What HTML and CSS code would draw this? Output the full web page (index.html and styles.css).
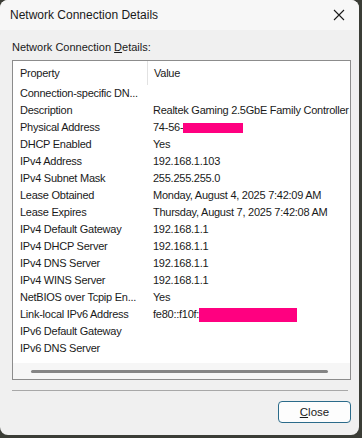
FILE: index.html
```html
<!DOCTYPE html>
<html>
<head>
<meta charset="utf-8">
<link rel="stylesheet" href="styles.css">
</head>
<body>
<div class="window">
  <div class="titlebar">
    <span class="title">Network Connection Details</span>
    <svg class="x" width="12" height="12" viewBox="0 0 12 12"><path d="M1 1L11 11M11 1L1 11" stroke="#1a1a1a" stroke-width="1.1" fill="none"/></svg>
  </div>
  <div class="body">
    <div class="label">Network Connection <u>D</u>etails:</div>
    <div class="list">
      <div class="head">
        <div class="c1">Property</div>
        <div class="c2">Value</div>
      </div>
      <div class="rows">
        <div class="row"><div class="c1">Connection-specific DN...</div><div class="c2"></div></div>
        <div class="row"><div class="c1">Description</div><div class="c2">Realtek Gaming 2.5GbE Family Controller</div></div>
        <div class="row"><div class="c1">Physical Address</div><div class="c2">74-56-<span class="redact r1"></span></div></div>
        <div class="row"><div class="c1">DHCP Enabled</div><div class="c2">Yes</div></div>
        <div class="row"><div class="c1">IPv4 Address</div><div class="c2">192.168.1.103</div></div>
        <div class="row"><div class="c1">IPv4 Subnet Mask</div><div class="c2">255.255.255.0</div></div>
        <div class="row"><div class="c1">Lease Obtained</div><div class="c2">Monday, August 4, 2025 7:42:09 AM</div></div>
        <div class="row"><div class="c1">Lease Expires</div><div class="c2">Thursday, August 7, 2025 7:42:08 AM</div></div>
        <div class="row"><div class="c1">IPv4 Default Gateway</div><div class="c2">192.168.1.1</div></div>
        <div class="row"><div class="c1">IPv4 DHCP Server</div><div class="c2">192.168.1.1</div></div>
        <div class="row"><div class="c1">IPv4 DNS Server</div><div class="c2">192.168.1.1</div></div>
        <div class="row"><div class="c1">IPv4 WINS Server</div><div class="c2">192.168.1.1</div></div>
        <div class="row"><div class="c1">NetBIOS over Tcpip En...</div><div class="c2">Yes</div></div>
        <div class="row"><div class="c1">Link-local IPv6 Address</div><div class="c2">fe80::f10f:<span class="redact r2"></span></div></div>
        <div class="row"><div class="c1">IPv6 Default Gateway</div><div class="c2"></div></div>
        <div class="row"><div class="c1">IPv6 DNS Server</div><div class="c2"></div></div>
      </div>
      <div class="scroll"><div class="thumb"></div></div>
    </div>
    <div class="sep"></div>
    <div class="actions">
      <button class="btn"><u>C</u>lose</button>
    </div>
  </div>
</div>
</body>
</html>
```
FILE: styles.css
```css
html, body {
  margin: 0;
  padding: 0;
}
body {
  width: 362px;
  height: 438px;
  background: #3b3d36;
  font-family: "Liberation Sans", Arial, sans-serif;
  color: #1a1a1a;
  overflow: hidden;
}
.window {
  width: 359px;
  height: 435px;
  background: #f0f0f0;
  border-radius: 8px;
  overflow: hidden;
  display: flex;
  flex-direction: column;
}
.titlebar {
  height: 30px;
  flex: none;
  background: #f7f7f7;
  display: flex;
  align-items: center;
  justify-content: space-between;
  padding: 0 14px 0 10px;
  font-size: 12px;
}
.title {
  padding-bottom: 1px;
}
.x {
  display: block;
}
.body {
  padding: 10px 8px 0 12px;
  display: flex;
  flex-direction: column;
}
.label {
  font-size: 11px;
  height: 14px;
  line-height: 14px;
  margin-bottom: 6px;
}
.list {
  width: 337px;
  height: 318px;
  border: 1px solid #8c8c8c;
  background: #fff;
  display: flex;
  flex-direction: column;
  font-size: 11px;
  letter-spacing: -0.25px;
  overflow: hidden;
}
.head {
  height: 24px;
  display: flex;
  align-items: center;
  flex: none;
}
.head .c1 {
  border-right: 1px solid #e2e2e2;
  height: 24px;
  line-height: 24px;
}
.rows {
  flex: 1;
}
.row {
  height: 17px;
  line-height: 17px;
  display: flex;
}
.c1 {
  width: 127px;
  padding-left: 7px;
  flex: none;
  white-space: nowrap;
}
.c2 {
  padding-left: 6px;
  white-space: nowrap;
  display: flex;
  align-items: center;
}
.redact {
  display: inline-block;
  background: #ff0080;
  height: 10px;
}
.r1 { width: 60px; }
.r2 { width: 98px; height: 14px; }
.scroll {
  height: 16px;
  flex: none;
  background: #f6f6f6;
  display: flex;
  align-items: center;
  padding: 0 22px 0 18px;
}
.thumb {
  flex: 1;
  height: 3px;
  border-radius: 2px;
  background: #858585;
}
.sep {
  width: 336px;
  height: 1px;
  background: #a8a8a8;
  margin-top: 10px;
}
.actions {
  display: flex;
  justify-content: flex-end;
  padding-top: 10px;
}
.btn {
  width: 73px;
  height: 22px;
  border: 1px solid #2b6b8a;
  border-radius: 4px;
  background: #fdfdfd;
  font-family: "Liberation Sans", Arial, sans-serif;
  font-size: 11.5px;
  color: #1a1a1a;
  padding: 0;
}
```
